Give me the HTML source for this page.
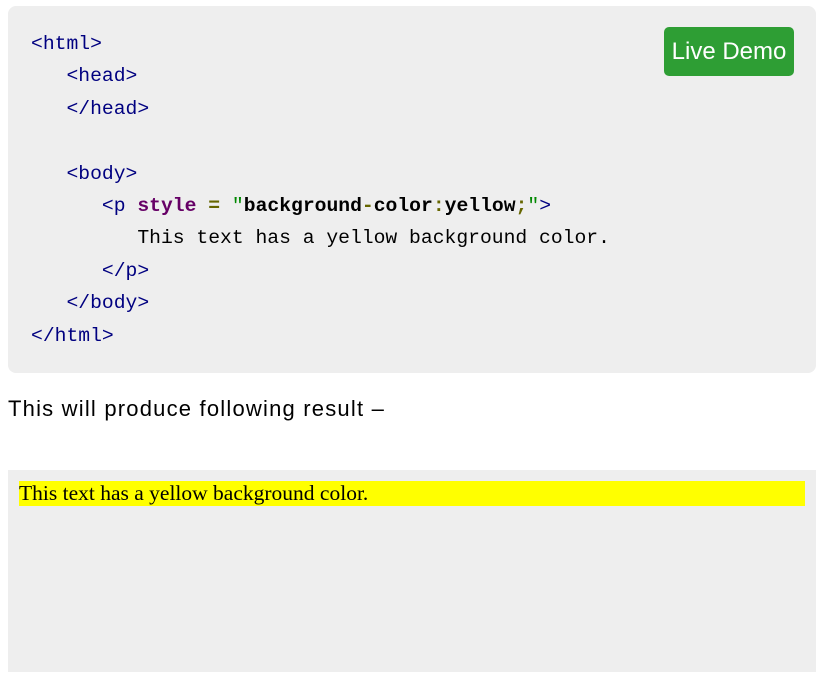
<!DOCTYPE html>
<html><head><style>
body{margin:0;background:#fff;width:825px;height:687px;position:relative;overflow:hidden}
.code{position:absolute;left:8px;top:6px;width:808px;height:367px;background:#eee;border-radius:8px}
pre{margin:0;position:absolute;left:31px;top:28px;font-family:"Liberation Mono",monospace;font-size:19.7px;line-height:32.4px;color:#000}
.t{color:#000080}.a{color:#660066}.e{color:#666600}.s{color:#008800}b{font-weight:bold;color:#000}
.btn{position:absolute;left:664px;top:27px;width:130px;height:49px;background:#2e9e34;border-radius:5px;color:#fff;font-family:"Liberation Sans",sans-serif;font-size:24px;line-height:49px;text-align:center}
.p{position:absolute;left:8px;top:396px;font-family:"Liberation Sans",sans-serif;font-size:22px;letter-spacing:1.2px;color:#000}
.res{position:absolute;left:8px;top:470px;width:808px;height:202px;background:#eee}
.y{position:absolute;left:11px;top:11px;width:786px;height:25px;background:#ff0;font-family:"Liberation Serif",serif;font-size:21.5px;line-height:25px;color:#000}
</style></head><body>
<div class="code"></div>
<pre><span class="t">&lt;html&gt;</span>
   <span class="t">&lt;head&gt;</span>
   <span class="t">&lt;/head&gt;</span>

   <span class="t">&lt;body&gt;</span>
      <span class="t">&lt;p</span> <b class="a">style</b> <b class="e">=</b> <span class="s">"</span><b>background</b><b class="e">-</b><b>color</b><b class="e">:</b><b>yellow</b><b class="e">;</b><span class="s">"</span><span class="t">&gt;</span>
         This text has a yellow background color.
      <span class="t">&lt;/p&gt;</span>
   <span class="t">&lt;/body&gt;</span>
<span class="t">&lt;/html&gt;</span></pre>
<div class="btn">Live Demo</div>
<div class="p">This will produce following result –</div>
<div class="res"><div class="y">This text has a yellow background color.</div></div>
</body></html>
